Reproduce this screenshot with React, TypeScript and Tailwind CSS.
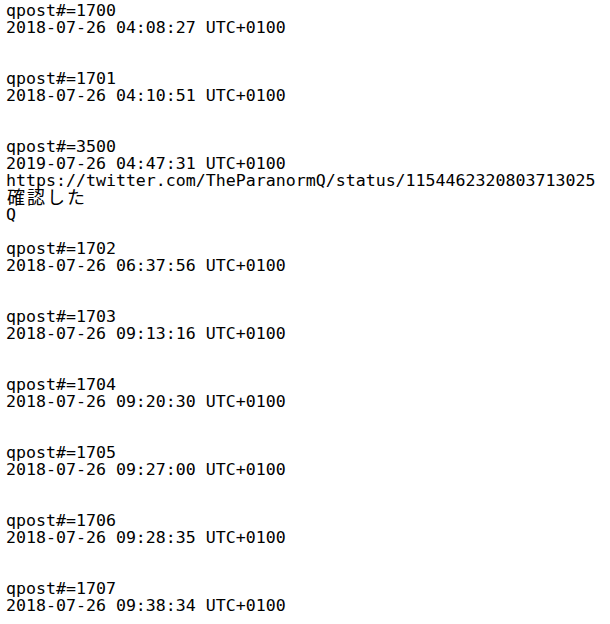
import React from "react";

type Post = {
  id: number;
  date: string;
  lines?: string[];
};

const posts: Post[] = [
  { id: 1700, date: "2018-07-26 04:08:27 UTC+0100" },
  { id: 1701, date: "2018-07-26 04:10:51 UTC+0100" },
  {
    id: 3500,
    date: "2019-07-26 04:47:31 UTC+0100",
    lines: [
      "https://twitter.com/TheParanormQ/status/1154462320803713025",
      "確認した",
      "Q",
    ],
  },
  { id: 1702, date: "2018-07-26 06:37:56 UTC+0100" },
  { id: 1703, date: "2018-07-26 09:13:16 UTC+0100" },
  { id: 1704, date: "2018-07-26 09:20:30 UTC+0100" },
  { id: 1705, date: "2018-07-26 09:27:00 UTC+0100" },
  { id: 1706, date: "2018-07-26 09:28:35 UTC+0100" },
  { id: 1707, date: "2018-07-26 09:38:34 UTC+0100" },
];

// CJK glyphs take two cells in the terminal-style output
const isWide = (s: string) => /[\u3000-\u9fff]/.test(s);

const Line = ({ text }: { text: string }) => (
  <div className="h-[17px] whitespace-pre">
    {isWide(text) ? (
      <span className="pl-[1px] text-[18px] tracking-[2px]">{text}</span>
    ) : (
      text
    )}
  </div>
);

const App = () => {
  return (
    <div className="min-h-screen bg-white text-black">
      <div className="pl-[6px] pt-[2px] font-['DejaVu_Sans_Mono','Noto_Sans_CJK_JP',monospace] text-[16.6px] leading-[17px]">
        {posts.map((p) => (
          <div key={p.id} className="pb-[17px]">
            <Line text={`qpost#=${p.id}`} />
            <Line text={p.date} />
            {p.lines ? p.lines.map((l) => <Line key={l} text={l} />) : <Line text="" />}
          </div>
        ))}
      </div>
    </div>
  );
};

export default App;
